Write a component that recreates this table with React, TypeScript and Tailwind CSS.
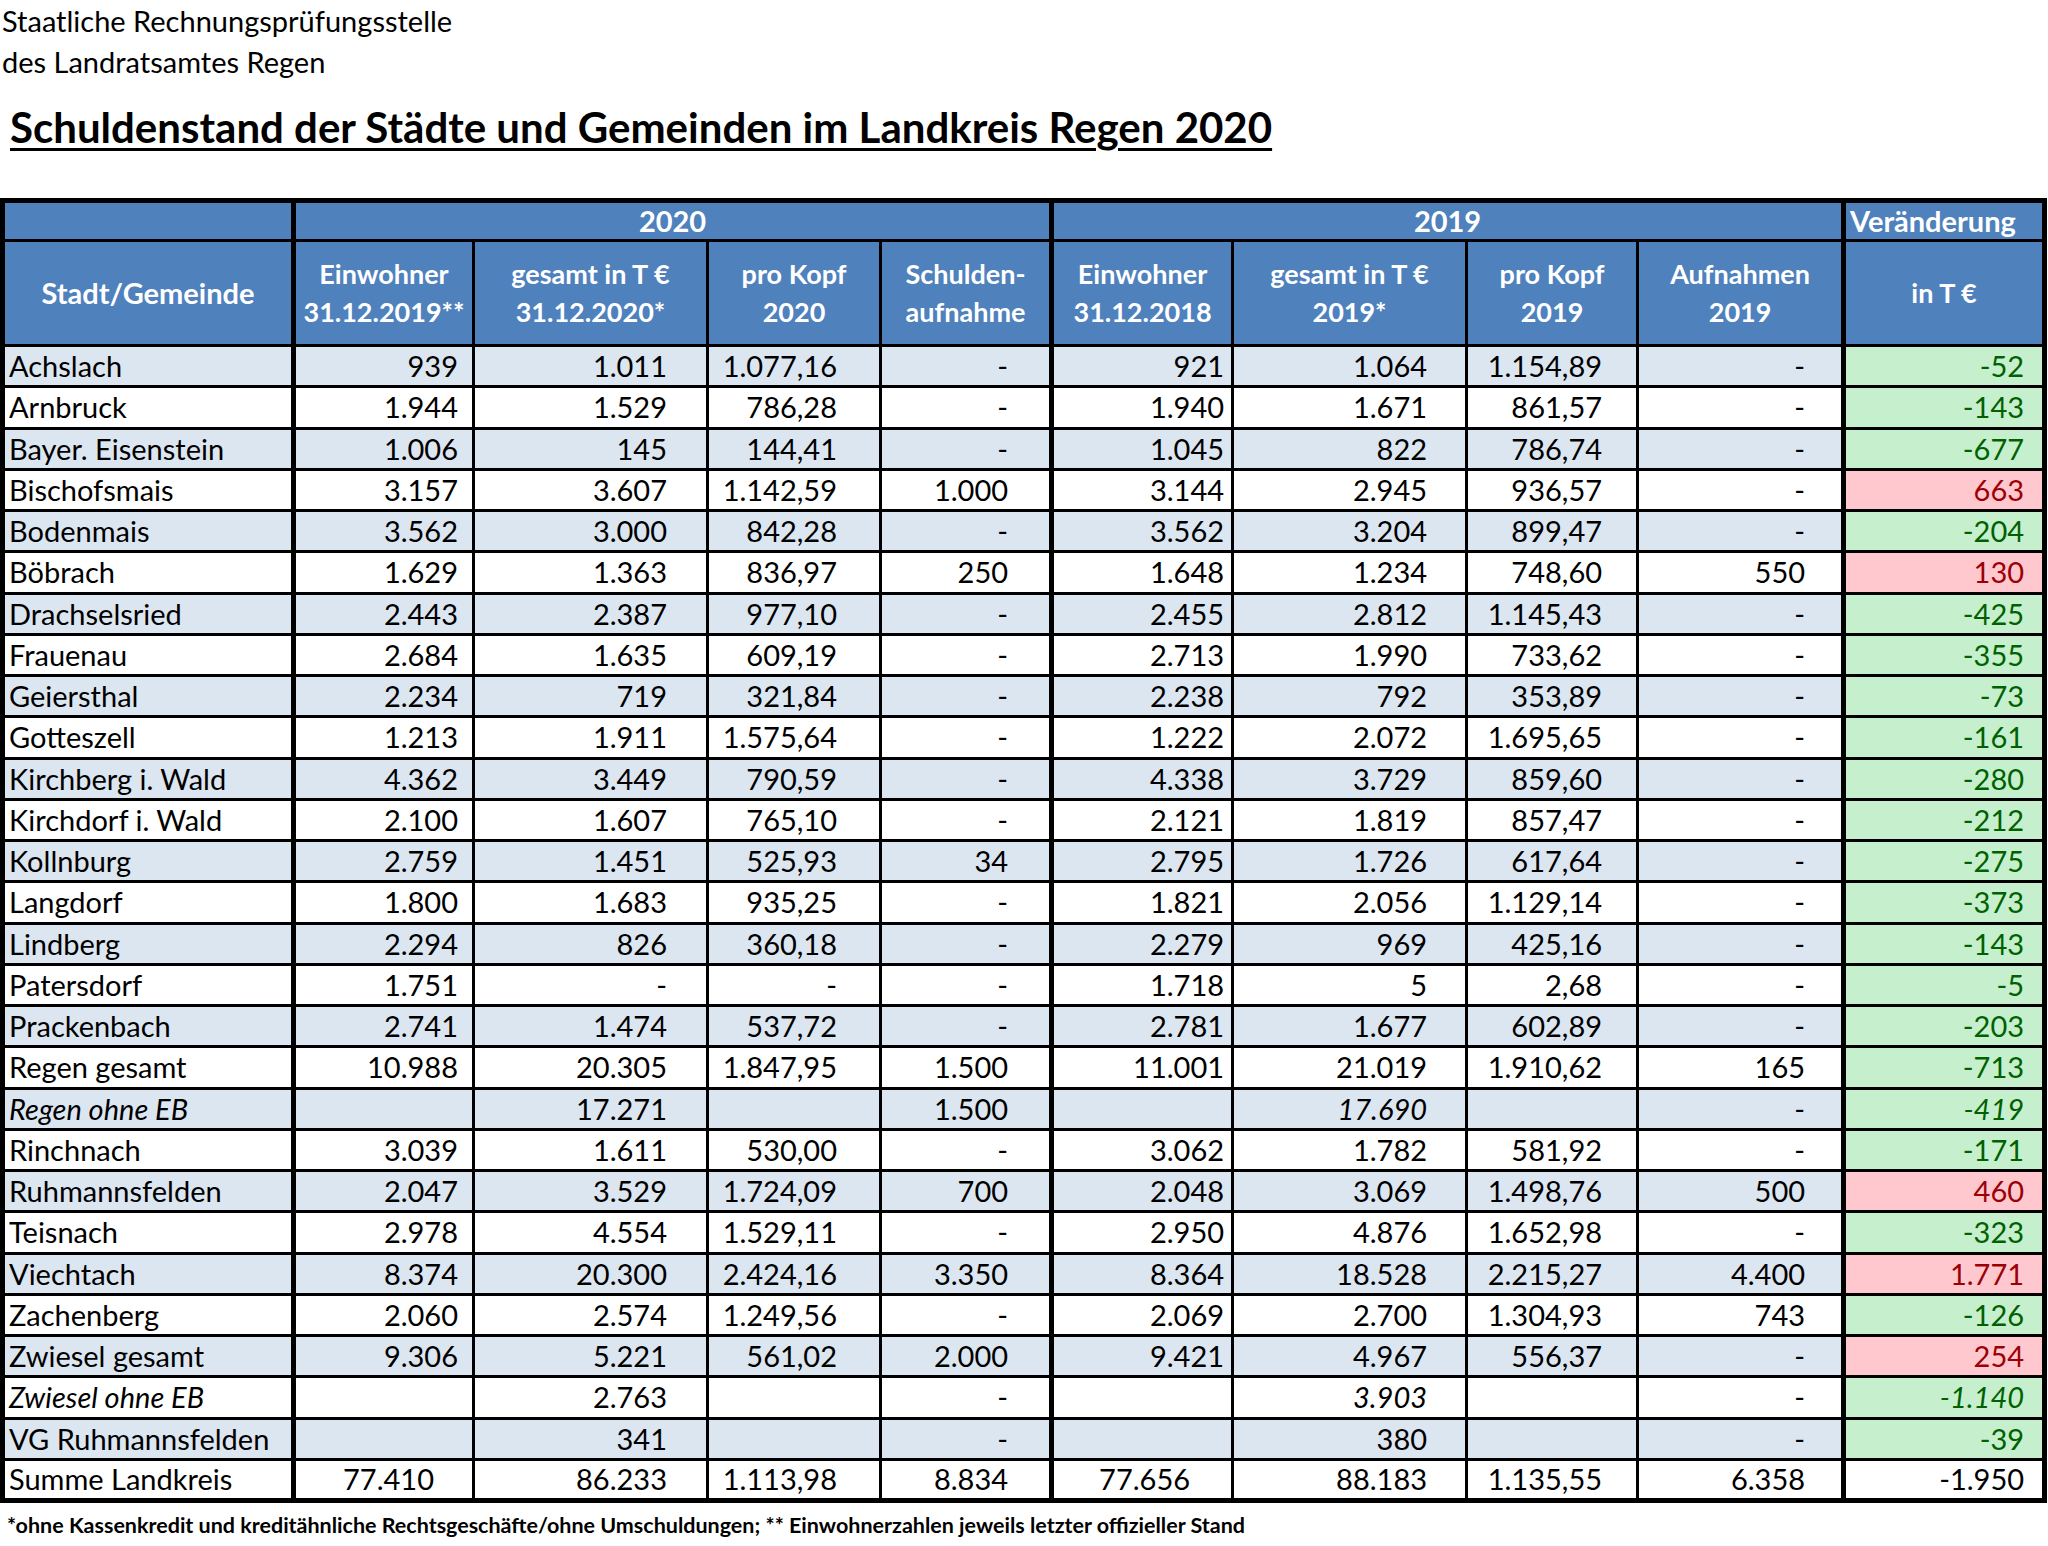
import React from "react";

type Row = {
  name: string;
  v: string[];
  d: string;
  tone: "g" | "r" | "n";
  italic?: boolean;
};

const rows: Row[] = [
  { name: "Achslach", v: ["939", "1.011", "1.077,16", "-", "921", "1.064", "1.154,89", "-"], d: "-52", tone: "g" },
  { name: "Arnbruck", v: ["1.944", "1.529", "786,28", "-", "1.940", "1.671", "861,57", "-"], d: "-143", tone: "g" },
  { name: "Bayer. Eisenstein", v: ["1.006", "145", "144,41", "-", "1.045", "822", "786,74", "-"], d: "-677", tone: "g" },
  { name: "Bischofsmais", v: ["3.157", "3.607", "1.142,59", "1.000", "3.144", "2.945", "936,57", "-"], d: "663", tone: "r" },
  { name: "Bodenmais", v: ["3.562", "3.000", "842,28", "-", "3.562", "3.204", "899,47", "-"], d: "-204", tone: "g" },
  { name: "Böbrach", v: ["1.629", "1.363", "836,97", "250", "1.648", "1.234", "748,60", "550"], d: "130", tone: "r" },
  { name: "Drachselsried", v: ["2.443", "2.387", "977,10", "-", "2.455", "2.812", "1.145,43", "-"], d: "-425", tone: "g" },
  { name: "Frauenau", v: ["2.684", "1.635", "609,19", "-", "2.713", "1.990", "733,62", "-"], d: "-355", tone: "g" },
  { name: "Geiersthal", v: ["2.234", "719", "321,84", "-", "2.238", "792", "353,89", "-"], d: "-73", tone: "g" },
  { name: "Gotteszell", v: ["1.213", "1.911", "1.575,64", "-", "1.222", "2.072", "1.695,65", "-"], d: "-161", tone: "g" },
  { name: "Kirchberg i. Wald", v: ["4.362", "3.449", "790,59", "-", "4.338", "3.729", "859,60", "-"], d: "-280", tone: "g" },
  { name: "Kirchdorf i. Wald", v: ["2.100", "1.607", "765,10", "-", "2.121", "1.819", "857,47", "-"], d: "-212", tone: "g" },
  { name: "Kollnburg", v: ["2.759", "1.451", "525,93", "34", "2.795", "1.726", "617,64", "-"], d: "-275", tone: "g" },
  { name: "Langdorf", v: ["1.800", "1.683", "935,25", "-", "1.821", "2.056", "1.129,14", "-"], d: "-373", tone: "g" },
  { name: "Lindberg", v: ["2.294", "826", "360,18", "-", "2.279", "969", "425,16", "-"], d: "-143", tone: "g" },
  { name: "Patersdorf", v: ["1.751", "-", "-", "-", "1.718", "5", "2,68", "-"], d: "-5", tone: "g" },
  { name: "Prackenbach", v: ["2.741", "1.474", "537,72", "-", "2.781", "1.677", "602,89", "-"], d: "-203", tone: "g" },
  { name: "Regen gesamt", v: ["10.988", "20.305", "1.847,95", "1.500", "11.001", "21.019", "1.910,62", "165"], d: "-713", tone: "g" },
  { name: "Regen ohne EB", v: ["", "17.271", "", "1.500", "", "17.690", "", "-"], d: "-419", tone: "g", italic: true },
  { name: "Rinchnach", v: ["3.039", "1.611", "530,00", "-", "3.062", "1.782", "581,92", "-"], d: "-171", tone: "g" },
  { name: "Ruhmannsfelden", v: ["2.047", "3.529", "1.724,09", "700", "2.048", "3.069", "1.498,76", "500"], d: "460", tone: "r" },
  { name: "Teisnach", v: ["2.978", "4.554", "1.529,11", "-", "2.950", "4.876", "1.652,98", "-"], d: "-323", tone: "g" },
  { name: "Viechtach", v: ["8.374", "20.300", "2.424,16", "3.350", "8.364", "18.528", "2.215,27", "4.400"], d: "1.771", tone: "r" },
  { name: "Zachenberg", v: ["2.060", "2.574", "1.249,56", "-", "2.069", "2.700", "1.304,93", "743"], d: "-126", tone: "g" },
  { name: "Zwiesel gesamt", v: ["9.306", "5.221", "561,02", "2.000", "9.421", "4.967", "556,37", "-"], d: "254", tone: "r" },
  { name: "Zwiesel ohne EB", v: ["", "2.763", "", "-", "", "3.903", "", "-"], d: "-1.140", tone: "g", italic: true },
  { name: "VG Ruhmannsfelden", v: ["", "341", "", "-", "", "380", "", "-"], d: "-39", tone: "g" },
  { name: "Summe Landkreis", v: ["77.410", "86.233", "1.113,98", "8.834", "77.656", "88.183", "1.135,55", "6.358"], d: "-1.950", tone: "n" },
];

// right padding of each value column, taken from the sheet
const padR = ["pr-[14px]", "pr-[39px]", "pr-[42px]", "pr-[41px]", "pr-[7px]", "pr-[38px]", "pr-[34px]", "pr-[36px]"];
const sumPadR = ["pr-[38px]", "pr-[39px]", "pr-[42px]", "pr-[41px]", "pr-[41px]", "pr-[38px]", "pr-[34px]", "pr-[36px]"];

// two-line column headers
const heads: { top: string; bottom: string; thick?: boolean }[] = [
  { top: "Einwohner", bottom: "31.12.2019**" },
  { top: "gesamt in T €", bottom: "31.12.2020*" },
  { top: "pro Kopf", bottom: "2020" },
  { top: "Schulden-", bottom: "aufnahme", thick: true },
  { top: "Einwohner", bottom: "31.12.2018" },
  { top: "gesamt in T €", bottom: "2019*" },
  { top: "pro Kopf", bottom: "2019" },
  { top: "Aufnahmen", bottom: "2019", thick: true },
];

const App = () => {
  return (
    <div className="w-[2048px] min-h-[1546px] bg-white text-black font-['Lato',sans-serif]">
      <div className="pl-[2px] text-[29px] leading-[41px]">
        <div>Staatliche Rechnungsprüfungsstelle</div>
        <div>des Landratsamtes Regen</div>
      </div>

      <h1 className="pl-[10px] mt-[19px] text-[42px] leading-[52px] font-bold underline underline-offset-[5px] decoration-[3px]">
        Schuldenstand der Städte und Gemeinden im Landkreis Regen 2020
      </h1>

      <table className="mt-[45px] w-[2047px] table-fixed border-collapse border-[5px] border-black text-[29px]">
        <colgroup>
          <col className="w-[291px]" />
          <col className="w-[180px]" />
          <col className="w-[234px]" />
          <col className="w-[173px]" />
          <col className="w-[171px]" />
          <col className="w-[181px]" />
          <col className="w-[234px]" />
          <col className="w-[171px]" />
          <col className="w-[206px]" />
          <col className="w-[201px]" />
        </colgroup>
        <thead className="bg-[#4f81bd] text-white font-bold">
          <tr className="h-[40px]">
            <th className="border-[3px] border-r-[5px] border-black"></th>
            <th colSpan={4} className="border-[3px] border-r-[5px] border-black text-center leading-[34px]">
              2020
            </th>
            <th colSpan={4} className="border-[3px] border-r-[5px] border-black text-center leading-[34px]">
              2019
            </th>
            <th className="border-[3px] border-black text-left pl-[4px] leading-[34px] whitespace-nowrap">
              Veränderung
            </th>
          </tr>
          <tr className="h-[105px]">
            <th className="border-[3px] border-r-[5px] border-black">Stadt/Gemeinde</th>
            {heads.map((h, k) => (
              <th
                key={k}
                className={`border-[3px] border-black text-[27px] leading-[38px] whitespace-nowrap ${
                  h.thick ? "border-r-[5px]" : ""
                }`}
              >
                {h.top}
                <br />
                {h.bottom}
              </th>
            ))}
            <th className="border-[3px] border-black text-[27px]">in T €</th>
          </tr>
        </thead>
        <tbody>
          {rows.map((r, i) => {
            const isSum = r.tone === "n";
            const bg = i % 2 === 0 ? "bg-[#dce6f1]" : "bg-white";
            return (
              <tr key={r.name} className={`h-[41.25px] ${bg}`}>
                <td
                  className={`border-[3px] border-r-[5px] border-black pl-[4px] leading-[34px] whitespace-nowrap ${
                    r.italic ? "italic" : ""
                  }`}
                >
                  {r.name}
                </td>
                {r.v.map((val, j) => (
                  <td
                    key={j}
                    className={`border-[3px] border-black text-right leading-[34px] ${
                      isSum ? sumPadR[j] : padR[j]
                    } ${j === 3 || j === 7 ? "border-r-[5px]" : ""} ${
                      r.italic && j === 5 ? "italic" : ""
                    }`}
                  >
                    {val}
                  </td>
                ))}
                <td
                  className={`border-[3px] border-black text-right pr-[18px] leading-[34px] ${
                    r.tone === "g"
                      ? "bg-[#c6efce] text-[#006100]"
                      : r.tone === "r"
                      ? "bg-[#ffc7ce] text-[#9c0006]"
                      : "bg-white text-black"
                  } ${r.italic ? "italic" : ""}`}
                >
                  {r.d}
                </td>
              </tr>
            );
          })}
        </tbody>
      </table>

      <div className="pl-[7px] mt-[8px] text-[21.5px] font-bold leading-[28px]">
        *ohne Kassenkredit und kreditähnliche Rechtsgeschäfte/ohne Umschuldungen; ** Einwohnerzahlen jeweils letzter offizieller Stand
      </div>
    </div>
  );
};

export default App;
